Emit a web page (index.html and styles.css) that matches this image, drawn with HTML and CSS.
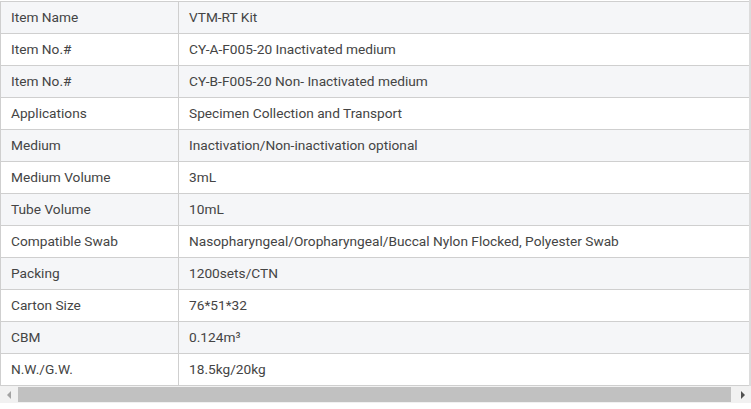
FILE: index.html
```html
<!DOCTYPE html>
<html>
<head>
<meta charset="utf-8">
<link rel="stylesheet" href="styles.css">
</head>
<body>
<div class="frame">
  <div class="viewport">
    <table class="spec">
      <tr><td class="k">Item Name</td><td class="v">VTM-RT Kit</td></tr>
      <tr><td class="k">Item No.#</td><td class="v">CY-A-F005-20 Inactivated medium</td></tr>
      <tr><td class="k">Item No.#</td><td class="v">CY-B-F005-20 Non- Inactivated medium</td></tr>
      <tr><td class="k">Applications</td><td class="v">Specimen Collection and Transport</td></tr>
      <tr><td class="k">Medium</td><td class="v">Inactivation/Non-inactivation optional</td></tr>
      <tr><td class="k">Medium Volume</td><td class="v">3mL</td></tr>
      <tr><td class="k">Tube Volume</td><td class="v">10mL</td></tr>
      <tr><td class="k">Compatible Swab</td><td class="v">Nasopharyngeal/Oropharyngeal/Buccal Nylon Flocked, Polyester Swab</td></tr>
      <tr><td class="k">Packing</td><td class="v">1200sets/CTN</td></tr>
      <tr><td class="k">Carton Size</td><td class="v">76*51*32</td></tr>
      <tr><td class="k">CBM</td><td class="v">0.124m³</td></tr>
      <tr><td class="k">N.W./G.W.</td><td class="v">18.5kg/20kg</td></tr>
    </table>
  </div>
  <div class="hscroll">
    <div class="arrow left"><svg width="6" height="8" viewBox="0 0 6 8"><path d="M5 0 L1 4 L5 8 Z" fill="#a3a3a3"/></svg></div>
    <div class="track"><div class="thumb"></div></div>
    <div class="arrow right"><svg width="6" height="8" viewBox="0 0 6 8"><path d="M1 0 L5 4 L1 8 Z" fill="#505050"/></svg></div>
  </div>
</div>
</body>
</html>
```
FILE: styles.css
```css
html, body {
  margin: 0;
  padding: 0;
  background: #ffffff;
}
.frame {
  width: 751px;
  height: 409px;
  display: flex;
  flex-direction: column;
  overflow: hidden;
}
.viewport {
  padding-top: 1px;
  overflow: hidden;
  border-right: 2px solid #dcdcdc;
  width: 749px;
}
.spec {
  border-collapse: collapse;
  width: 760px;
  font-family: Roboto, "Liberation Sans", sans-serif;
  font-size: 13.7px;
  color: #444444;
}
.spec tr {
  height: 32px;
}
.spec tr:nth-child(odd) {
  background: #f5f6f8;
}
.spec td {
  border: 1px solid #cfcfcf;
  padding: 0 0 2px 10px;
  vertical-align: middle;
  white-space: nowrap;
}
.spec td.k {
  width: 167px;
}
.hscroll {
  height: 17px;
  display: flex;
  align-items: stretch;
  background: #f1f1f1;
}
.arrow {
  width: 17px;
  display: flex;
  align-items: center;
  justify-content: center;
}
.track {
  flex: 1;
  display: flex;
  align-items: center;
  padding: 0 3px 0 1px;
}
.thumb {
  flex: 1;
  height: 15px;
  background: #c1c1c1;
}
```
